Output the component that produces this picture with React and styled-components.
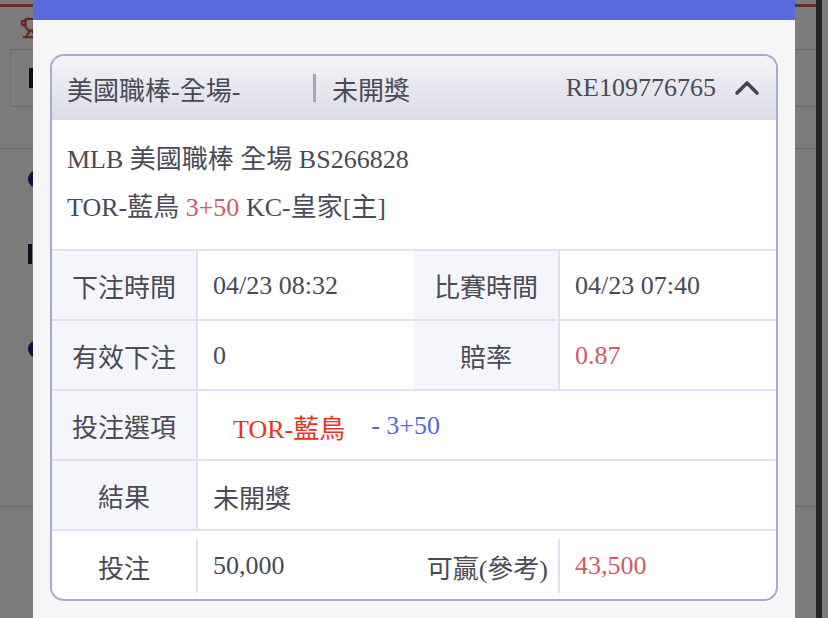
import React from 'react'
import styled, { createGlobalStyle } from 'styled-components'
import { Trophy } from 'lucide-react'

const GlobalStyle = createGlobalStyle`
  html, body {
    margin: 0;
    padding: 0;
  }
  body {
    width: 828px;
    height: 618px;
    overflow: hidden;
    background: #ffffff;
    font-family: "Liberation Serif", "Noto Sans CJK TC", serif;
  }
`

const Page = styled.div`
  position: relative;
  width: 828px;
  height: 618px;
  overflow: hidden;
  display: flex;
`

/* page behind the dialog */
const Under = styled.div`
  flex: 1;
  display: flex;
  flex-direction: column;
  padding-top: 4px;
`

const UnderTop = styled.div`
  height: 42px;
  border-top: 3px solid #e8584a;
  padding-left: 20px;
  display: flex;
  align-items: center;
  color: #d2503e;
`

const UnderBox = styled.div`
  height: 56px;
  margin: 0 0 0 10px;
  border-top: 1px solid #d8d8e0;
  border-bottom: 1px solid #d8d8e0;
  border-left: 1px solid #ececf0;
  display: flex;
  align-items: center;
  padding-left: 18px;
`

const UnderItem = styled.div`
  height: ${(p) => p.$h}px;
  border-bottom: ${(p) => (p.$line ? '1px solid #d8d8e0' : 'none')};
  display: flex;
  align-items: center;
  padding-left: 28px;
`

const Glyph = styled.span`
  width: 4px;
  height: 20px;
  background: #1a1f3a;
`

const Dot = styled.span`
  width: 18px;
  height: 18px;
  border-radius: 50%;
  background: #1e2a78;
`

const ScrollRail = styled.div`
  width: 6px;
  margin-right: 6px;
  background: #4a4a4e;
`

/* dialog */
const Overlay = styled.div`
  position: absolute;
  inset: 0;
  background: rgba(0, 0, 0, 0.515);
  display: flex;
  justify-content: center;
`

const Modal = styled.div`
  width: 762px;
  height: 100%;
  background: #f6f6f7;
  display: flex;
  flex-direction: column;
`

const ModalBar = styled.div`
  height: 20px;
  background: #5a6bdf;
`

const ModalBody = styled.div`
  padding: 34px 17px 0;
`

const Card = styled.div`
  border: 2px solid #a6aad0;
  border-radius: 14px;
  overflow: hidden;
  background: #ffffff;
  color: #4a4a56;
  font-size: 26px;
`

const CardHeader = styled.div`
  height: 64px;
  display: flex;
  align-items: center;
  padding: 0 16px 0 15px;
  background: linear-gradient(#f4f4f8, #dadbe7);
`

const League = styled.span`
  width: 246px;
`

const Sep = styled.span`
  width: 3px;
  height: 28px;
  background: #a4a5ae;
  margin-right: 16px;
`

const Code = styled.span`
  margin-left: auto;
  margin-right: 18px;
`

const Info = styled.div`
  padding: 16px 15px 17px;
  line-height: 48px;
`

const Red = styled.span`
  color: ${(p) => (p.$bright ? '#e8321f' : '#cf5a66')};
`

const Blue = styled.span`
  color: #5569e0;
  margin-left: 26px;
`

const Row = styled.div`
  display: grid;
  grid-template-columns: 146px 216px 146px 1fr;
  height: 70px;
  box-sizing: border-box;
  border-top: 2px solid #e0e0f3;
`

const Label = styled.div`
  display: flex;
  align-items: center;
  justify-content: ${(p) => (p.$end ? 'flex-end' : 'center')};
  padding-right: ${(p) => (p.$end ? '10px' : '0')};
  background: ${(p) => (p.$plain ? '#ffffff' : '#f5f6fb')};
  border-right: 2px solid #e0e0f3;
  margin: ${(p) => (p.$plain ? '8px 0 6px' : '0')};
`

const Value = styled.div`
  display: flex;
  align-items: center;
  padding-left: ${(p) => p.$pad || 15}px;
  padding-top: 2px;
  grid-column: ${(p) => (p.$wide ? '2 / -1' : 'auto')};
`

const Chevron = () => (
  <svg width="26" height="16" viewBox="0 0 26 16">
    <polyline
      points="3,13 13,3 23,13"
      fill="none"
      stroke="#45454f"
      strokeWidth="3.6"
      strokeLinecap="round"
      strokeLinejoin="round"
    />
  </svg>
)

export default function App() {
  return (
    <Page>
      <GlobalStyle />
      <Under>
        <UnderTop>
          <Trophy size={22} strokeWidth={2.5} />
        </UnderTop>
        <UnderBox>
          <Glyph />
        </UnderBox>
        <UnderItem $h={41} $line />
        <UnderItem $h={60}>
          <Dot />
        </UnderItem>
        <UnderItem $h={90}>
          <Glyph />
        </UnderItem>
        <UnderItem $h={100}>
          <Dot />
        </UnderItem>
        <UnderItem $h={107} $line />
      </Under>
      <ScrollRail />
      <Overlay>
        <Modal>
          <ModalBar />
          <ModalBody>
            <Card>
              <CardHeader>
                <League>美國職棒-全場-</League>
                <Sep />
                <span>未開獎</span>
                <Code>RE109776765</Code>
                <Chevron />
              </CardHeader>
              <Info>
                <div>MLB 美國職棒 全場 BS266828</div>
                <div>
                  TOR-藍鳥 <Red>3+50</Red> KC-皇家[主]
                </div>
              </Info>
              <Row>
                <Label>下注時間</Label>
                <Value>04/23 08:32</Value>
                <Label>比賽時間</Label>
                <Value>04/23 07:40</Value>
              </Row>
              <Row>
                <Label>有效下注</Label>
                <Value>0</Value>
                <Label>賠率</Label>
                <Value>
                  <Red>0.87</Red>
                </Value>
              </Row>
              <Row>
                <Label>投注選項</Label>
                <Value $wide $pad={35}>
                  <Red $bright>TOR-藍鳥</Red>
                  <Blue>- 3+50</Blue>
                </Value>
              </Row>
              <Row>
                <Label>結果</Label>
                <Value $wide>未開獎</Value>
              </Row>
              <Row>
                <Label $plain>投注</Label>
                <Value>50,000</Value>
                <Label $plain $end>可贏(參考)</Label>
                <Value>
                  <Red>43,500</Red>
                </Value>
              </Row>
            </Card>
          </ModalBody>
        </Modal>
      </Overlay>
    </Page>
  )
}
